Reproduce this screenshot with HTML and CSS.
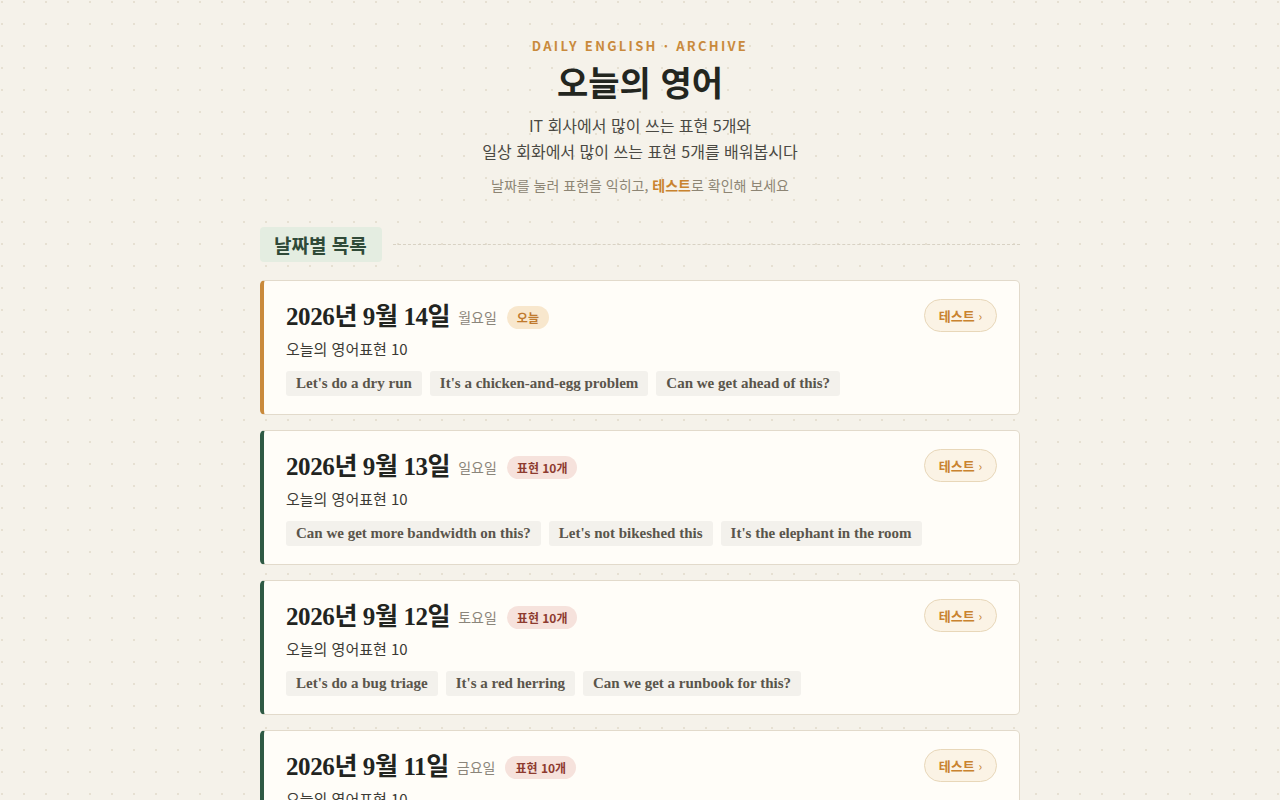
FILE: index.html
```html
<!DOCTYPE html>
<html lang="ko">
<head>
    <meta charset="utf-8">
    <title>오늘의 영어 - 날짜별 목록</title>
    <link rel="stylesheet" href="styles.css">
</head>
<body>
<div class="wrap">
    <header class="hero">
        <div class="eyebrow">DAILY ENGLISH · ARCHIVE</div>
        <h1 class="title">오늘의 영어</h1>
        <p class="lead">IT 회사에서 많이 쓰는 표현 5개와<br>일상 회화에서 많이 쓰는 표현 5개를 배워봅시다</p>
        <p class="hint">날짜를 눌러 표현을 익히고, <b>테스트</b>로 확인해 보세요</p>
    </header>

    <div class="section-head">
        <span class="section-label">날짜별 목록</span>
        <span class="section-line"></span>
    </div>

    <ul class="day-list">
        <li class="day today">
            <div class="day-top">
                <div class="day-title">
                    <span class="date">2026년 9월 14일</span>
                    <span class="weekday">월요일</span>
                    <span class="badge badge-today">오늘</span>
                </div>
                <a class="test-btn" href="#">테스트 <span class="arr">›</span></a>
            </div>
            <div class="day-sub">오늘의 영어표현 10</div>
            <div class="chips">
                <span class="chip">Let's do a dry run</span>
                <span class="chip">It's a chicken-and-egg problem</span>
                <span class="chip">Can we get ahead of this?</span>
            </div>
        </li>
        <li class="day">
            <div class="day-top">
                <div class="day-title">
                    <span class="date">2026년 9월 13일</span>
                    <span class="weekday">일요일</span>
                    <span class="badge">표현 10개</span>
                </div>
                <a class="test-btn" href="#">테스트 <span class="arr">›</span></a>
            </div>
            <div class="day-sub">오늘의 영어표현 10</div>
            <div class="chips">
                <span class="chip">Can we get more bandwidth on this?</span>
                <span class="chip">Let's not bikeshed this</span>
                <span class="chip">It's the elephant in the room</span>
            </div>
        </li>
        <li class="day">
            <div class="day-top">
                <div class="day-title">
                    <span class="date">2026년 9월 12일</span>
                    <span class="weekday">토요일</span>
                    <span class="badge">표현 10개</span>
                </div>
                <a class="test-btn" href="#">테스트 <span class="arr">›</span></a>
            </div>
            <div class="day-sub">오늘의 영어표현 10</div>
            <div class="chips">
                <span class="chip">Let's do a bug triage</span>
                <span class="chip">It's a red herring</span>
                <span class="chip">Can we get a runbook for this?</span>
            </div>
        </li>
        <li class="day">
            <div class="day-top">
                <div class="day-title">
                    <span class="date">2026년 9월 11일</span>
                    <span class="weekday">금요일</span>
                    <span class="badge">표현 10개</span>
                </div>
                <a class="test-btn" href="#">테스트 <span class="arr">›</span></a>
            </div>
            <div class="day-sub">오늘의 영어표현 10</div>
            <div class="chips">
                <span class="chip">Let's take this offline</span>
                <span class="chip">It's low-hanging fruit</span>
                <span class="chip">Can we circle back on this?</span>
            </div>
        </li>
    </ul>
</div>
</body>
</html>
```

FILE: styles.css
```css
* {
    box-sizing: border-box;
}

body {
    margin: 0;
    background-color: #f5f2ea;
    background-image: radial-gradient(circle, #e6e0d2 1px, transparent 1.2px);
    background-size: 22px 22px;
    background-position: -9px -9px;
    font-family: "Noto Sans CJK KR", "Noto Sans", sans-serif;
    color: #2a2a26;
}

.wrap {
    width: 760px;
    margin: 0 auto;
    padding-top: 36px;
}

.hero {
    text-align: center;
}

.eyebrow {
    font-size: 13px;
    font-weight: 700;
    letter-spacing: 2.3px;
    color: #c98a3c;
    line-height: 20px;
}

.title {
    margin: 4px 0 0;
    font-size: 34px;
    font-weight: 700;
    line-height: 44px;
    color: #23261f;
}

.lead {
    margin: 8px 0 0;
    font-size: 16px;
    line-height: 26px;
    color: #4a4943;
}

.hint {
    margin: 11px 0 0;
    font-size: 14px;
    line-height: 20px;
    color: #8d8574;
}

.hint b {
    color: #c9832f;
    font-weight: 700;
}

.section-head {
    display: flex;
    align-items: center;
    gap: 11px;
    margin-top: 32px;
}

.section-label {
    background: #e4ede1;
    color: #2f4a38;
    font-size: 19px;
    font-weight: 700;
    line-height: 35px;
    padding: 0 15px 0 14px;
    border-radius: 4px;
}

.section-line {
    flex: 1;
    border-top: 1px dashed #d8d2c4;
}

.day-list {
    list-style: none;
    margin: 18px 0 0;
    padding: 0;
    display: flex;
    flex-direction: column;
    gap: 15px;
}

.day {
    background: #fffdf8;
    border: 1px solid #e2dacb;
    border-left: 4px solid #2f5a44;
    border-radius: 5px;
    padding: 19px 22px 18px 22px;
}

.day.today {
    border-left-color: #c98a3c;
}

.day-top {
    display: flex;
    justify-content: space-between;
    align-items: center;
}

.day-title {
    display: flex;
    align-items: center;
    gap: 10px;
}

.date {
    font-family: "Liberation Serif", "Noto Sans CJK KR", serif;
    font-size: 25px;
    font-weight: 700;
    color: #22241f;
    line-height: 34px;
    letter-spacing: -0.4px;
}

.weekday {
    font-size: 14px;
    color: #8b857a;
    margin-left: -2px;
}

.badge {
    font-size: 12px;
    font-weight: 700;
    line-height: 23px;
    padding: 0 10px;
    border-radius: 12px;
    background: #f6e2dc;
    color: #8e3b2f;
}

.badge-today {
    background: #f8e7cd;
    color: #c07a2e;
}

.test-btn {
    display: inline-block;
    margin-top: -3px;
    text-decoration: none;
    font-size: 13px;
    font-weight: 700;
    color: #c9832f;
    background: #fbf3e5;
    border: 1px solid #e8d7b9;
    border-radius: 17px;
    line-height: 31px;
    padding: 0 14px;
}

.test-btn .arr {
    font-weight: 400;
    font-size: 12px;
}

.day-sub {
    margin-top: 4px;
    font-size: 15px;
    line-height: 22px;
    color: #3b3a34;
}

.chips {
    display: flex;
    flex-wrap: wrap;
    gap: 8px;
    margin-top: 11px;
}

.chip {
    font-family: "Liberation Serif", serif;
    font-size: 15px;
    font-weight: 700;
    color: #5a554b;
    background: #f3f1ec;
    border-radius: 3px;
    line-height: 25px;
    padding: 0 10px;
}
```
